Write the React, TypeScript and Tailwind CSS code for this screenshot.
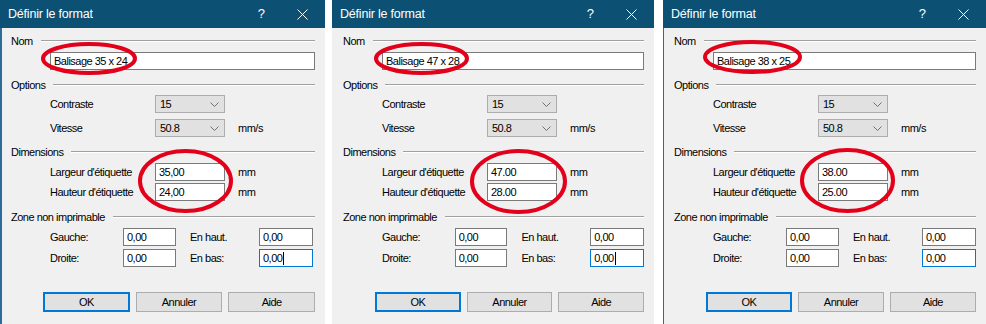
import React from "react";

type Ring = { cx: number; cy: number; rx: number; ry: number };

type Format = {
	width: number;
	name: string;
	largeur: string;
	hauteur: string;
	caret: boolean;
	edge: string;
	gap: string;
	rings: Ring[];
};

const formats: Format[] = [
	{
		width: 325,
		name: "Balisage 35 x 24",
		largeur: "35,00",
		hauteur: "24,00",
		caret: true,
		edge: "shadow-[inset_2px_0_0_#2c6c98]",
		gap: "",
		rings: [
			{ cx: 89, cy: 58.5, rx: 46, ry: 14.5 },
			{ cx: 185.5, cy: 181, rx: 45.5, ry: 30 },
		],
	},
	{
		width: 322,
		name: "Balisage 47 x 28",
		largeur: "47.00",
		hauteur: "28.00",
		caret: true,
		edge: "",
		gap: "ml-[7px]",
		rings: [
			{ cx: 89.5, cy: 58.5, rx: 45.5, ry: 14.5 },
			{ cx: 186.5, cy: 181.5, rx: 46.5, ry: 30.5 },
		],
	},
	{
		width: 323,
		name: "Balisage 38 x 25",
		largeur: "38.00",
		hauteur: "25.00",
		caret: false,
		edge: "shadow-[inset_1px_0_0_#2c6c98]",
		gap: "ml-[9px]",
		rings: [
			{ cx: 89.5, cy: 57, rx: 47.5, ry: 15 },
			{ cx: 184.5, cy: 180.5, rx: 45.5, ry: 30.5 },
		],
	},
];

export default function App() {
	return (
		<div className="flex h-[324px] w-[986px] overflow-hidden bg-white font-['Liberation_Sans',Arial,sans-serif] text-[11px] tracking-[-0.5px] text-black">
			{formats.map((f) => (
				<Dialog key={f.name} format={f} />
			))}
		</div>
	);
}

function Dialog({ format }: { format: Format }) {
	return (
		<div
			className={`relative flex h-[324px] shrink-0 flex-col bg-[#f0f0f0] ${format.edge} ${format.gap}`}
			style={{ width: format.width }}
		>
			<TitleBar />

			<div className="flex flex-col pl-[11px] pr-[10px]">
				<GroupHeader label="Nom" className="mt-[6px]" />
				<div className="mt-[4px] pl-[39px]">
					<TextBox value={format.name} className="w-full" />
				</div>

				<GroupHeader label="Options" className="mt-[8px]" />
				<div className="mt-[3px] flex items-center pl-[39px]">
					<span className="w-[105px]">Contraste</span>
					<Select value="15" />
				</div>
				<div className="mt-[6px] flex items-center pl-[39px]">
					<span className="w-[105px]">Vitesse</span>
					<Select value="50.8" />
					<span className="ml-[13px]">mm/s</span>
				</div>

				<GroupHeader label="Dimensions" className="mt-[8px]" />
				<div className="mt-[4px] flex items-center pl-[39px]">
					<span className="w-[105px]">Largeur d'étiquette</span>
					<TextBox value={format.largeur} className="w-[70px]" />
					<span className="ml-[13px]">mm</span>
				</div>
				<div className="mt-[2px] flex items-center pl-[39px]">
					<span className="w-[105px]">Hauteur d'étiquette</span>
					<TextBox value={format.hauteur} className="w-[70px]" />
					<span className="ml-[13px]">mm</span>
				</div>

				<GroupHeader label="Zone non imprimable" className="mt-[9px]" />
				<div className="mt-[4px] flex items-center pl-[39px]">
					<span className="w-[73px]">Gauche:</span>
					<TextBox value="0,00" className="w-[53px]" />
					<span className="ml-[14px] w-[69px]">En haut.</span>
					<TextBox value="0,00" className="w-[54px]" />
				</div>
				<div className="mt-[3px] flex items-center pl-[39px]">
					<span className="w-[73px]">Droite:</span>
					<TextBox value="0,00" className="w-[53px]" />
					<span className="ml-[14px] w-[69px]">En bas:</span>
					<TextBox value="0,00" className="w-[54px]" focused caret={format.caret} />
				</div>

				<div className="mt-[25px] flex gap-[6px] pl-[32px]">
					<Button label="OK" primary />
					<Button label="Annuler" />
					<Button label="Aide" />
				</div>
			</div>

			<svg
				className="pointer-events-none absolute left-0 top-0"
				width={format.width}
				height={324}
			>
				{format.rings.map((r, i) => (
					<ellipse
						key={i}
						cx={r.cx}
						cy={r.cy}
						rx={r.rx}
						ry={r.ry}
						fill="none"
						stroke="#e2001a"
						strokeWidth={4}
					/>
				))}
			</svg>
		</div>
	);
}

function TitleBar() {
	return (
		<div className="flex h-[28px] items-center bg-[#0c5073] pl-[8px] text-white">
			<span className="text-[12.5px] tracking-[-0.2px]">Définir le format</span>
			<span className="ml-auto w-[20px] text-center text-[13px] font-light">?</span>
			<span className="ml-[21px] mr-[13px] flex w-[20px] justify-center">
				<svg width="11" height="11" viewBox="0 0 11 11">
					<path d="M0.5 0.5 L10.5 10.5 M10.5 0.5 L0.5 10.5" stroke="#fff" strokeWidth="1" />
				</svg>
			</span>
		</div>
	);
}

function GroupHeader({ label, className }: { label: string; className?: string }) {
	return (
		<div className={`flex h-[14px] items-center ${className ?? ""}`}>
			<span>{label}</span>
			<div className="ml-[8px] h-[2px] flex-1 border-b border-t border-b-white border-t-[#a0a0a0]" />
		</div>
	);
}

function TextBox({
	value,
	className,
	focused,
	caret,
}: {
	value: string;
	className?: string;
	focused?: boolean;
	caret?: boolean;
}) {
	return (
		<div
			className={`flex h-[18px] items-center border bg-white pl-[3px] ${
				focused ? "border-[#0078d7]" : "border-[#7a7a7a]"
			} ${className ?? ""}`}
		>
			<span>{value}</span>
			{caret && <span className="ml-[1px] h-[13px] w-[1px] bg-black" />}
		</div>
	);
}

function Select({ value }: { value: string }) {
	return (
		<div className="flex h-[18px] w-[70px] items-center border border-[#adadad] bg-[#e1e1e1] pl-[4px] pr-[5px]">
			<span>{value}</span>
			<svg className="ml-auto" width="9" height="5" viewBox="0 0 9 5">
				<path d="M0.5 0.5 L4.5 4.5 L8.5 0.5" fill="none" stroke="#707070" strokeWidth="1" />
			</svg>
		</div>
	);
}

function Button({ label, primary }: { label: string; primary?: boolean }) {
	return (
		<div
			className={`flex h-[20px] w-[87px] items-center justify-center bg-[#e1e1e1] ${
				primary ? "border-2 border-[#0078d7]" : "border border-[#adadad]"
			}`}
		>
			{label}
		</div>
	);
}
